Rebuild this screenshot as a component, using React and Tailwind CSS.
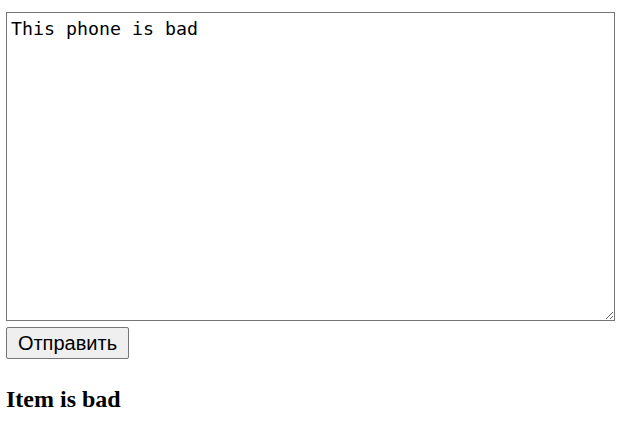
import React, { useState } from "react";

const App = () => {
  const [text, setText] = useState("This phone is bad");

  return (
    <div className="min-h-[432px] w-[640px] bg-white pl-[6px] pt-[12px]">
      <div className="flex flex-col items-start">
        <textarea
          value={text}
          onChange={(e) => setText(e.target.value)}
          className="block h-[309px] w-[609px] resize border border-[#767676] pl-[4px] pr-[3px] pt-[5px] font-['DejaVu_Sans_Mono',monospace] text-[18.3px] leading-[22px] text-black outline-none"
        />
        <button
          type="button"
          className="mt-[6px] flex h-[32px] w-[123px] items-center justify-center rounded-[2px] border border-[#767676] bg-[#efefef] font-['Liberation_Sans',Arial,sans-serif] text-[20px] leading-none text-black"
        >
          Отправить
        </button>
        <h3 className="mt-[26px] font-['Liberation_Serif','Times_New_Roman',serif] text-[24px] leading-[28px] font-bold text-black">
          Item is bad
        </h3>
      </div>
    </div>
  );
};

export default App;
